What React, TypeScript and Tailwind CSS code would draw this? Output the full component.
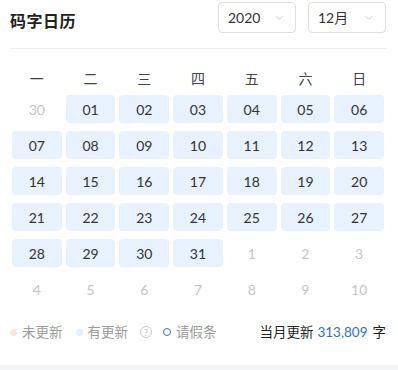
import { ChevronDown } from 'lucide-react';

const weekdays = ['一', '二', '三', '四', '五', '六', '日'];

type Day = { label: string; inMonth: boolean };

function buildDays(): Day[] {
  const days: Day[] = [{ label: '30', inMonth: false }];
  for (let d = 1; d <= 31; d++) {
    days.push({ label: d < 10 ? `0${d}` : `${d}`, inMonth: true });
  }
  for (let d = 1; d <= 10; d++) {
    days.push({ label: `${d}`, inMonth: false });
  }
  return days;
}

function Select({ value }: { value: string }) {
  return (
    <div className="flex items-center justify-between w-[78px] h-[31px] pl-[9px] pr-[10px] border border-[#dcdfe6] rounded-[4px] bg-white">
      <span className="text-[14px] text-[#333]">{value}</span>
      <ChevronDown className="w-[12px] h-[12px] text-[#b4b4b4]" strokeWidth={1.5} />
    </div>
  );
}

export default function App() {
  const days = buildDays();

  return (
    <div
      className="w-[398px] h-[370px] bg-[#f4f5f7] overflow-hidden"
      style={{ fontFamily: "Lato, 'Noto Sans CJK SC', sans-serif" }}
    >
      <div className="h-[365px] bg-white pl-[10px] pr-[12px]">
        <div className="flex items-start justify-between h-[49px] pt-[2px] border-b border-[#ebedf0]">
          <h1 className="mt-[7px] text-[16px] font-bold text-[#222] tracking-[0.5px]">码字日历</h1>
          <div className="flex gap-[12px]">
            <Select value="2020" />
            <Select value="12月" />
          </div>
        </div>

        <div className="mx-[2px]">
          <div className="grid grid-cols-7 gap-x-[4px] mt-[15px] h-[28px]">
            {weekdays.map(w => (
              <div key={w} className="flex items-center justify-center text-[14px] text-[#444]">
                {w}
              </div>
            ))}
          </div>

          <div className="grid grid-cols-7 gap-x-[4px] gap-y-[8px] mt-[3px]">
            {days.map((d, i) => (
              <div
                key={i}
                className={
                  d.inMonth
                    ? 'flex items-center justify-center h-[28px] rounded-[4px] bg-[#e8f1fe] text-[14px] text-[#333]'
                    : 'flex items-center justify-center h-[28px] text-[14px] text-[#c4c4c4]'
                }
              >
                {d.label}
              </div>
            ))}
          </div>
        </div>

        <div className="flex items-center justify-between mt-[19px] h-[20px] text-[13.5px]">
          <div className="flex items-center text-[#9a9a9a]">
            <span className="w-[7px] h-[7px] rounded-full bg-[#fde3e3]" />
            <span className="ml-[5px]">未更新</span>
            <span className="ml-[13px] w-[7px] h-[7px] rounded-full bg-[#e3eefe]" />
            <span className="ml-[5px]">有更新</span>
            <span className="ml-[12px] flex items-center justify-center w-[12px] h-[12px] rounded-full border border-[#c8c8c8] text-[9px] leading-none text-[#c0c0c0]">
              ?
            </span>
            <span className="ml-[11px] w-[8px] h-[8px] rounded-full border-[1.5px] border-[#2f6fd0]" />
            <span className="ml-[5px]">请假条</span>
          </div>
          <div className="flex items-center text-[#222]">
            <span>当月更新</span>
            <span className="ml-[4px] text-[#2f6fc8]">313,809</span>
            <span className="ml-[5px]">字</span>
          </div>
        </div>
      </div>
    </div>
  );
}
